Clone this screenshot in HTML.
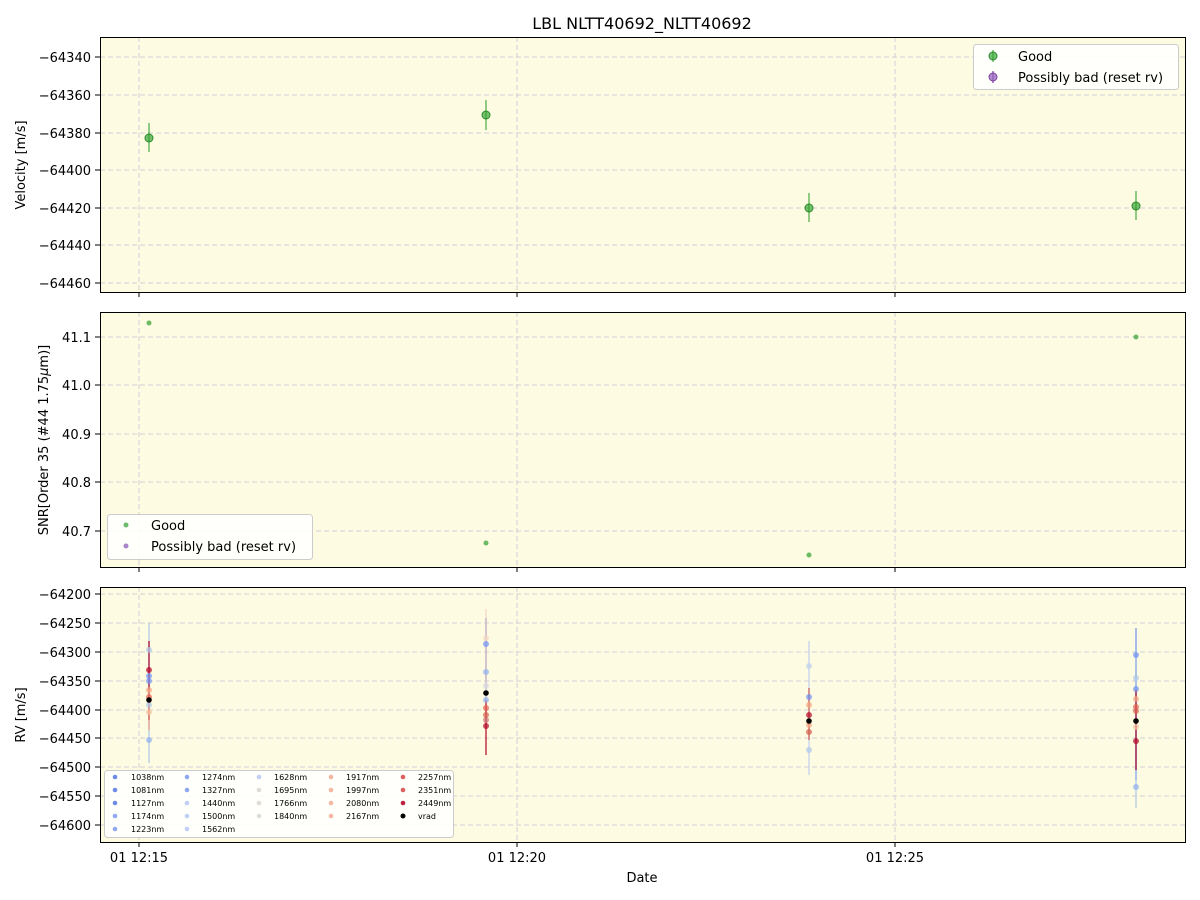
<!DOCTYPE html>
<html><head><meta charset="utf-8"><style>
html,body{margin:0;padding:0;background:#fff}
svg{display:block;font-family:"DejaVu Sans","Liberation Sans",sans-serif}
</style></head><body>
<svg width="1200" height="900" viewBox="0 0 1200 900" xmlns="http://www.w3.org/2000/svg">
<text x="642" y="29" font-size="16" text-anchor="middle">LBL NLTT40692_NLTT40692</text>

<rect x="100" y="37" width="1085" height="255" fill="#fdfbe1"/>
<rect x="100" y="312" width="1085" height="255" fill="#fdfbe1"/>
<rect x="100" y="587" width="1085" height="255" fill="#fdfbe1"/>

<g stroke="#d2d2d8" stroke-dasharray="5,3" stroke-width="1">
<line x1="139" y1="37" x2="139" y2="292"/><line x1="517" y1="37" x2="517" y2="292"/><line x1="895" y1="37" x2="895" y2="292"/>
<line x1="139" y1="312" x2="139" y2="567"/><line x1="517" y1="312" x2="517" y2="567"/><line x1="895" y1="312" x2="895" y2="567"/>
<line x1="139" y1="587" x2="139" y2="842"/><line x1="517" y1="587" x2="517" y2="842"/><line x1="895" y1="587" x2="895" y2="842"/>
<line x1="100" y1="57" x2="1185" y2="57"/><line x1="100" y1="95" x2="1185" y2="95"/><line x1="100" y1="133" x2="1185" y2="133"/><line x1="100" y1="170" x2="1185" y2="170"/><line x1="100" y1="208" x2="1185" y2="208"/><line x1="100" y1="245" x2="1185" y2="245"/><line x1="100" y1="283" x2="1185" y2="283"/>
<line x1="100" y1="337" x2="1185" y2="337"/><line x1="100" y1="385" x2="1185" y2="385"/><line x1="100" y1="434" x2="1185" y2="434"/><line x1="100" y1="482" x2="1185" y2="482"/><line x1="100" y1="531" x2="1185" y2="531"/>
<line x1="100" y1="594" x2="1185" y2="594"/><line x1="100" y1="623" x2="1185" y2="623"/><line x1="100" y1="652" x2="1185" y2="652"/><line x1="100" y1="681" x2="1185" y2="681"/><line x1="100" y1="710" x2="1185" y2="710"/><line x1="100" y1="738" x2="1185" y2="738"/><line x1="100" y1="767" x2="1185" y2="767"/><line x1="100" y1="796" x2="1185" y2="796"/><line x1="100" y1="825" x2="1185" y2="825"/>
</g>

<g fill="none" stroke="#000" stroke-width="1">
<rect x="100.5" y="37.5" width="1085" height="255"/>
<rect x="100.5" y="312.5" width="1085" height="255"/>
<rect x="100.5" y="587.5" width="1085" height="255"/>
<path d="M139 292v5M517 292v5M895 292v5M139 567v5M517 567v5M895 567v5M139 842v5M517 842v5M895 842v5"/>
<path d="M100 57h-5M100 95h-5M100 133h-5M100 170h-5M100 208h-5M100 245h-5M100 283h-5"/>
<path d="M100 337h-5M100 385h-5M100 434h-5M100 482h-5M100 531h-5"/>
<path d="M100 594h-5M100 623h-5M100 652h-5M100 681h-5M100 710h-5M100 738h-5M100 767h-5M100 796h-5M100 825h-5"/>
</g>

<g font-size="13" text-anchor="end">
<text x="91" y="62">−64340</text><text x="91" y="100">−64360</text><text x="91" y="138">−64380</text><text x="91" y="175">−64400</text><text x="91" y="213">−64420</text><text x="91" y="250">−64440</text><text x="91" y="288">−64460</text>
<text x="91" y="342">41.1</text><text x="91" y="390">41.0</text><text x="91" y="439">40.9</text><text x="91" y="487">40.8</text><text x="91" y="536">40.7</text>
<text x="91" y="599">−64200</text><text x="91" y="628">−64250</text><text x="91" y="657">−64300</text><text x="91" y="686">−64350</text><text x="91" y="715">−64400</text><text x="91" y="743">−64450</text><text x="91" y="772">−64500</text><text x="91" y="801">−64550</text><text x="91" y="830">−64600</text>
</g>
<g font-size="13" text-anchor="middle">
<text x="139" y="862">01 12:15</text><text x="517" y="862">01 12:20</text><text x="895" y="862">01 12:25</text>
<text x="642" y="882">Date</text>
</g>
<text transform="translate(25,165) rotate(-90)" font-size="13" text-anchor="middle">Velocity [m/s]</text>
<text transform="translate(48,440) rotate(-90)" font-size="13" text-anchor="middle">SNR[Order 35 (#44 1.75<tspan font-style="italic">μ</tspan>m)]</text>
<text transform="translate(25,715) rotate(-90)" font-size="13" text-anchor="middle">RV [m/s]</text>

<g stroke="#2ca02c" stroke-opacity="0.7" stroke-width="1.5">
<line x1="149" y1="123" x2="149" y2="152"/><line x1="486" y1="100" x2="486" y2="130"/><line x1="809" y1="193" x2="809" y2="222"/><line x1="1136" y1="191" x2="1136" y2="220"/>
</g>
<g fill="#2ca02c" fill-opacity="0.65" stroke="#2a8a2a" stroke-width="1">
<circle cx="149" cy="138" r="4"/><circle cx="486" cy="115" r="4"/><circle cx="809" cy="208" r="4"/><circle cx="1136" cy="206" r="4"/>
</g>
<rect x="973.5" y="44.5" width="205" height="45" rx="3" fill="#fff" fill-opacity="0.85" stroke="#ccc"/>
<line x1="993" y1="50" x2="993" y2="62" stroke="#2ca02c" stroke-opacity="0.7" stroke-width="1.5"/>
<circle cx="993" cy="56" r="4" fill="#2ca02c" fill-opacity="0.65" stroke="#2a8a2a"/>
<line x1="993" y1="71" x2="993" y2="83" stroke="#9467bd" stroke-width="1.5"/>
<circle cx="993" cy="77" r="4" fill="#9467bd" fill-opacity="0.75" stroke="#8040a0"/>
<text x="1018" y="61" font-size="13">Good</text>
<text x="1018" y="82" font-size="13">Possibly bad (reset rv)</text>

<g fill="#2ca02c" fill-opacity="0.7">
<circle cx="149" cy="323" r="2.5"/><circle cx="486" cy="543" r="2.5"/><circle cx="809" cy="555" r="2.5"/><circle cx="1136" cy="337" r="2.5"/>
</g>
<rect x="107.5" y="514.5" width="205" height="45" rx="3" fill="#fff" fill-opacity="0.85" stroke="#ccc"/>
<circle cx="126" cy="525" r="2.5" fill="#2ca02c" fill-opacity="0.7"/>
<circle cx="126" cy="546" r="2.5" fill="#9467bd" fill-opacity="0.8"/>
<text x="151" y="530" font-size="13">Good</text>
<text x="151" y="551" font-size="13">Possibly bad (reset rv)</text>

<g stroke-width="2" stroke-opacity="0.6">
<line x1="149" y1="623" x2="149" y2="763" stroke="#aec7e8"/>
<line x1="149" y1="641" x2="149" y2="720" stroke="#b40426"/>
<line x1="149" y1="690" x2="149" y2="730" stroke="#f4a582"/>
<line x1="486" y1="609" x2="486" y2="680" stroke="#f5d5c0"/>
<line x1="486" y1="618" x2="486" y2="700" stroke="#c0b0d0"/>
<line x1="486" y1="700" x2="486" y2="755" stroke="#b40426"/>
<line x1="809" y1="641" x2="809" y2="775" stroke="#bfd0f0"/>
<line x1="809" y1="688" x2="809" y2="740" stroke="#d6604d"/>
<line x1="1136" y1="628" x2="1136" y2="780" stroke="#6f92f3"/>
<line x1="1136" y1="650" x2="1136" y2="808" stroke="#aec7e8"/>
<line x1="1136" y1="690" x2="1136" y2="770" stroke="#b40426"/>
</g>
<g fill-opacity="0.7">
<circle cx="149" cy="650" r="3" fill="#aec7e8"/><circle cx="149" cy="670" r="3" fill="#b40426"/><circle cx="149" cy="676" r="3" fill="#6f92f3"/><circle cx="149" cy="681" r="3" fill="#6f92f3"/><circle cx="149" cy="690" r="3" fill="#f4a582"/><circle cx="149" cy="697" r="3" fill="#e66050"/><circle cx="149" cy="705" r="3" fill="#aec7e8"/><circle cx="149" cy="712" r="3" fill="#f4c0a0"/><circle cx="149" cy="740" r="3" fill="#8fb0f0"/>
<circle cx="486" cy="644" r="3" fill="#6f92f3"/><circle cx="486" cy="638" r="3" fill="#f5d5c0"/><circle cx="486" cy="672" r="3" fill="#8fb0f0"/><circle cx="486" cy="686" r="3" fill="#d6d6e0"/><circle cx="486" cy="700" r="3" fill="#8fb0f0"/><circle cx="486" cy="708" r="3" fill="#e66050"/><circle cx="486" cy="715" r="3" fill="#d6604d"/><circle cx="486" cy="720" r="3" fill="#cc7070"/><circle cx="486" cy="726" r="3" fill="#b40426"/>
<circle cx="809" cy="666" r="3" fill="#bfd0f0"/><circle cx="809" cy="697" r="3" fill="#6f92f3"/><circle cx="809" cy="705" r="3" fill="#f4a582"/><circle cx="809" cy="715" r="3" fill="#b40426"/><circle cx="809" cy="725" r="3" fill="#f4a582"/><circle cx="809" cy="732" r="3" fill="#d6604d"/><circle cx="809" cy="750" r="3" fill="#aec7e8"/>
<circle cx="1136" cy="655" r="3" fill="#6f92f3"/><circle cx="1136" cy="678" r="3" fill="#aec7e8"/><circle cx="1136" cy="689" r="3" fill="#6f92f3"/><circle cx="1136" cy="699" r="3" fill="#f4a582"/><circle cx="1136" cy="707" r="3" fill="#e66050"/><circle cx="1136" cy="711" r="3" fill="#d6604d"/><circle cx="1136" cy="727" r="3" fill="#f4c0a0"/><circle cx="1136" cy="741" r="3" fill="#b40426"/><circle cx="1136" cy="787" r="3" fill="#8fb0f0"/>
</g>
<g fill="#000">
<circle cx="149" cy="700" r="2.8"/><circle cx="486" cy="693" r="2.8"/><circle cx="809" cy="721" r="2.8"/><circle cx="1136" cy="721" r="2.8"/>
</g>

<rect x="104.5" y="770.5" width="349" height="67" rx="3" fill="#fff" fill-opacity="0.85" stroke="#ccc"/>
<g font-size="8" textLength="33">
<g fill="#6f8ae8"><circle cx="115" cy="777" r="2.3"/><circle cx="115" cy="790" r="2.3"/><circle cx="115" cy="803" r="2.3"/></g>
<g fill="#8fa8f0"><circle cx="115" cy="816" r="2.3"/><circle cx="115" cy="829" r="2.3"/><circle cx="187" cy="777" r="2.3"/><circle cx="187" cy="790" r="2.3"/></g>
<g fill="#c0d0f5"><circle cx="187" cy="803" r="2.3"/><circle cx="187" cy="816" r="2.3"/><circle cx="187" cy="829" r="2.3"/><circle cx="259" cy="777" r="2.3"/></g>
<g fill="#e0dcd8"><circle cx="259" cy="790" r="2.3"/><circle cx="259" cy="803" r="2.3"/><circle cx="259" cy="816" r="2.3"/></g>
<g fill="#f4b8a0"><circle cx="331" cy="777" r="2.3"/><circle cx="331" cy="790" r="2.3"/><circle cx="331" cy="803" r="2.3"/><circle cx="331" cy="816" r="2.3"/></g>
<g fill="#dc6060"><circle cx="403" cy="777" r="2.3"/><circle cx="403" cy="790" r="2.3"/></g>
<circle cx="403" cy="803" r="2.3" fill="#c02040"/><circle cx="403" cy="816" r="2.5" fill="#000"/>
<text x="131" y="780">1038nm</text><text x="131" y="793">1081nm</text><text x="131" y="806">1127nm</text><text x="131" y="819">1174nm</text><text x="131" y="832">1223nm</text>
<text x="202" y="780">1274nm</text><text x="202" y="793">1327nm</text><text x="202" y="806">1440nm</text><text x="202" y="819">1500nm</text><text x="202" y="832">1562nm</text>
<text x="274" y="780">1628nm</text><text x="274" y="793">1695nm</text><text x="274" y="806">1766nm</text><text x="274" y="819">1840nm</text>
<text x="346" y="780">1917nm</text><text x="346" y="793">1997nm</text><text x="346" y="806">2080nm</text><text x="346" y="819">2167nm</text>
<text x="418" y="780">2257nm</text><text x="418" y="793">2351nm</text><text x="418" y="806">2449nm</text><text x="418" y="819">vrad</text>
</g>
</svg>
</body></html>
